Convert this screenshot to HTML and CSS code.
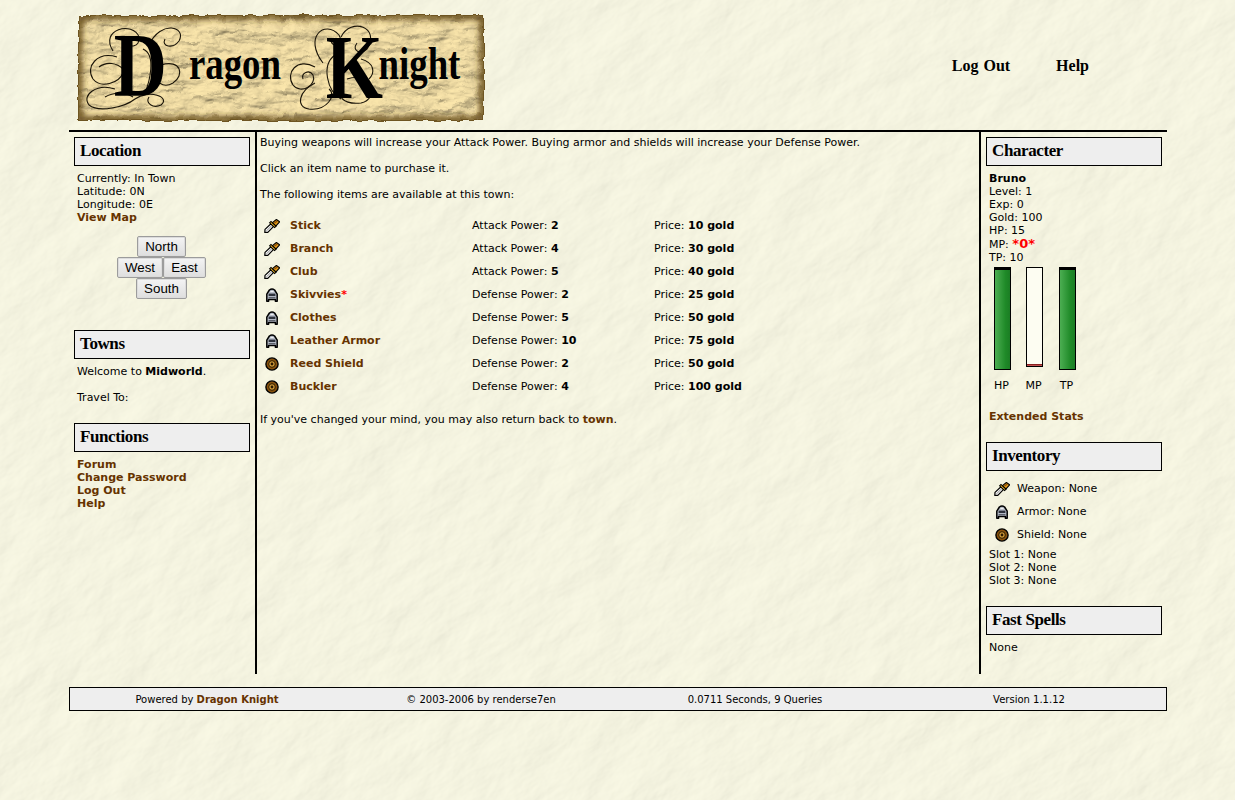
FILE: index.html
```html
<!DOCTYPE html>
<html lang="en">
<head>
    <meta charset="UTF-8">
    <meta name="viewport" content="width=device-width, initial-scale=1.0">
    <title>Dragon Knight</title>
    <link rel="stylesheet" href="styles.css">
</head>
<body>

    <!-- item icons, reused below -->
    <svg class="defs" width="0" height="0">
        <symbol id="icon-sword" viewBox="0 0 16 14">
            <path d="M0.8 13.4 L1 10.4 L7 4.8 L9.6 7.4 L3.8 13.4 Z" fill="#fafafa" stroke="#000" stroke-width="1.2" stroke-linejoin="round"/>
            <path d="M2.6 11.8 L7.6 6.8" stroke="#8a8a8a" stroke-width="1"/>
            <path d="M5.6 3.8 L7 2.4 L12 7.2 L10.6 8.6 Z" fill="#f4b820" stroke="#000" stroke-width="1.1"/>
            <path d="M8.4 3.6 L12.4 0.5 L15.6 2.8 L12 6.8 Z" fill="#e89c14" stroke="#000" stroke-width="1.1" stroke-linejoin="round"/>
            <path d="M10.4 4 L13.4 2" stroke="#8a4c08" stroke-width="1.2"/>
        </symbol>
        <symbol id="icon-armor" viewBox="0 0 14 14">
            <path d="M1.8 13.2 V6.2 L4.4 2 Q7 0.2 9.6 2 L12.2 6.2 V13.2 H10.4 V11.4 H3.6 V13.2 Z" fill="#b4bac6" stroke="#000" stroke-width="1.5" stroke-linejoin="round"/>
            <path d="M3.6 5.6 H10.4 V8 H3.6 Z" fill="#2e323c"/>
            <path d="M3.6 9.6 H10.4" stroke="#5c606a" stroke-width="1.2"/>
            <path d="M5.4 3.6 H8.6" stroke="#f4f4f4" stroke-width="1"/>
        </symbol>
        <symbol id="icon-shield" viewBox="0 0 14 14">
            <circle cx="7" cy="7" r="6.1" fill="#87500c" stroke="#000" stroke-width="1.4"/>
            <circle cx="7" cy="7" r="3.3" fill="#d09a38" stroke="#2c1a00" stroke-width="1"/>
            <circle cx="7" cy="7" r="1.4" fill="#2a1800"/>
        </symbol>
    </svg>

    <div class="page">

        <header class="top">
            <svg class="logo" width="408" height="110" viewBox="0 0 408 110">
                <defs>
                    <filter id="rough" x="-3%" y="-8%" width="106%" height="116%">
                        <feTurbulence type="fractalNoise" baseFrequency="0.09" numOctaves="3" seed="4" result="n"/>
                        <feDisplacementMap in="SourceGraphic" in2="n" scale="5"/>
                    </filter>
                    <filter id="parchment" x="0" y="0" width="100%" height="100%">
                        <feTurbulence type="fractalNoise" baseFrequency="0.03 0.08" numOctaves="5" seed="9" result="n"/>
                        <feDiffuseLighting in="n" surfaceScale="5" lighting-color="#fbe6ac" result="l">
                            <feDistantLight azimuth="45" elevation="60"/>
                        </feDiffuseLighting>
                        <feComposite in="l" in2="SourceAlpha" operator="in"/>
                    </filter>
                    <filter id="blur3"><feGaussianBlur stdDeviation="3"/></filter>
                    <clipPath id="sheet"><rect x="2" y="3" width="404" height="104"/></clipPath>
                </defs>
                <g filter="url(#rough)">
                    <rect x="1" y="2" width="406" height="106" fill="#6e5420"/>
                    <g clip-path="url(#sheet)">
                        <rect x="1" y="2" width="406" height="106" fill="#fff" filter="url(#parchment)"/>
                        <rect x="2" y="3" width="404" height="104" fill="none" stroke="#5e4512" stroke-width="7" filter="url(#blur3)"/>
                    </g>
                </g>
                <g class="logo-swirls">
                    <path d="M36 38 C22 16 56 8 62 24 C64 34 50 36 52 28"/>
                    <path d="M72 32 C84 6 110 14 102 28 C96 36 84 34 88 26"/>
                    <path d="M40 44 C20 38 8 54 16 66 C24 76 42 70 46 60"/>
                    <path d="M22 54 C30 48 40 50 46 56"/>
                    <path d="M38 76 C20 70 4 82 12 92 C22 100 48 94 58 86 C72 76 94 84 84 92 C76 96 68 90 72 84"/>
                    <path d="M84 52 C104 46 108 62 96 70 C86 76 76 68 82 60"/>
                    <path d="M66 36 C80 42 72 70 68 80"/>
                    <path d="M28 84 C38 78 50 80 56 84"/>
                    <path d="M246 50 C226 24 248 6 262 22 C268 32 256 36 254 28"/>
                    <path d="M264 24 C274 4 304 14 290 36 C284 42 274 38 280 30"/>
                    <path d="M238 54 C220 44 208 60 216 72 C224 82 240 72 236 62 C232 56 224 60 226 66"/>
                    <path d="M238 70 C222 78 218 94 232 96 C250 98 260 82 252 76"/>
                    <path d="M270 66 C298 58 302 86 284 90 C266 92 258 82 266 74"/>
                    <path d="M258 42 C244 52 250 78 264 86"/>
                    <path d="M284 46 C298 50 298 60 292 66"/>
                </g>
                <text class="logo-text" transform="scale(0.8 1)"><tspan class="logo-cap" x="46" y="83">D</tspan><tspan x="140" y="66">ragon </tspan><tspan class="logo-cap" x="311" y="85">K</tspan><tspan x="377" y="66">night</tspan></text>
            </svg>
            <nav class="topnav">
                <a href="#">Log Out</a>
                <a href="#">Help</a>
            </nav>
        </header>

        <div class="columns">

            <aside class="side">
                <section class="panel">
                    <h2 class="title">Location</h2>
                    <div class="lines">
                        Currently: In Town<br>
                        Latitude: 0N<br>
                        Longitude: 0E<br>
                        <a href="#">View Map</a>
                    </div>
                    <div class="compass">
                        <div><button class="btn-north">North</button></div>
                        <div><button class="btn-west">West</button><button class="btn-east">East</button></div>
                        <div><button class="btn-south">South</button></div>
                    </div>
                </section>

                <section class="panel towns">
                    <h2 class="title">Towns</h2>
                    <div class="lines">
                        Welcome to <b>Midworld</b>.<br><br>
                        Travel To:
                    </div>
                </section>

                <section class="panel functions">
                    <h2 class="title">Functions</h2>
                    <div class="lines">
                        <a href="#">Forum</a><br>
                        <a href="#">Change Password</a><br>
                        <a href="#">Log Out</a><br>
                        <a href="#">Help</a>
                    </div>
                </section>
            </aside>

            <main class="content">
                <p>Buying weapons will increase your Attack Power. Buying armor and shields will increase your Defense Power.</p>
                <p>Click an item name to purchase it.</p>
                <p>The following items are available at this town:</p>

                <div class="items">
                    <div class="item">
                        <svg class="icon"><use href="#icon-sword"/></svg>
                        <a href="#">Stick</a>
                        <span>Attack Power: <b>2</b></span>
                        <span>Price: <b>10 gold</b></span>
                    </div>
                    <div class="item">
                        <svg class="icon"><use href="#icon-sword"/></svg>
                        <a href="#">Branch</a>
                        <span>Attack Power: <b>4</b></span>
                        <span>Price: <b>30 gold</b></span>
                    </div>
                    <div class="item">
                        <svg class="icon"><use href="#icon-sword"/></svg>
                        <a href="#">Club</a>
                        <span>Attack Power: <b>5</b></span>
                        <span>Price: <b>40 gold</b></span>
                    </div>
                    <div class="item">
                        <svg class="icon"><use href="#icon-armor"/></svg>
                        <span><a href="#">Skivvies</a><b class="special">*</b></span>
                        <span>Defense Power: <b>2</b></span>
                        <span>Price: <b>25 gold</b></span>
                    </div>
                    <div class="item">
                        <svg class="icon"><use href="#icon-armor"/></svg>
                        <a href="#">Clothes</a>
                        <span>Defense Power: <b>5</b></span>
                        <span>Price: <b>50 gold</b></span>
                    </div>
                    <div class="item">
                        <svg class="icon"><use href="#icon-armor"/></svg>
                        <a href="#">Leather Armor</a>
                        <span>Defense Power: <b>10</b></span>
                        <span>Price: <b>75 gold</b></span>
                    </div>
                    <div class="item">
                        <svg class="icon"><use href="#icon-shield"/></svg>
                        <a href="#">Reed Shield</a>
                        <span>Defense Power: <b>2</b></span>
                        <span>Price: <b>50 gold</b></span>
                    </div>
                    <div class="item">
                        <svg class="icon"><use href="#icon-shield"/></svg>
                        <a href="#">Buckler</a>
                        <span>Defense Power: <b>4</b></span>
                        <span>Price: <b>100 gold</b></span>
                    </div>
                </div>

                <p class="back">If you've changed your mind, you may also return back to <a href="#">town</a>.</p>
            </main>

            <aside class="side">
                <section class="panel">
                    <h2 class="title">Character</h2>
                    <div class="lines">
                        <b>Bruno</b><br>
                        Level: 1<br>
                        Exp: 0<br>
                        Gold: 100<br>
                        HP: 15<br>
                        MP: <b class="special big">*0*</b><br>
                        TP: 10
                    </div>
                    <div class="bars">
                        <div class="bar-col">
                            <div class="bar"><div class="fill" style="height: 100%"></div></div>
                            <span>HP</span>
                        </div>
                        <div class="bar-col">
                            <div class="bar bar-empty"><div class="fill fill-low" style="height: 2px"></div></div>
                            <span>MP</span>
                        </div>
                        <div class="bar-col">
                            <div class="bar"><div class="fill" style="height: 100%"></div></div>
                            <span>TP</span>
                        </div>
                    </div>
                    <div class="lines extended"><a href="#">Extended Stats</a></div>
                </section>

                <section class="panel inventory">
                    <h2 class="title">Inventory</h2>
                    <div class="gear">
                        <div class="gear-row"><svg class="icon"><use href="#icon-sword"/></svg><span>Weapon: None</span></div>
                        <div class="gear-row"><svg class="icon"><use href="#icon-armor"/></svg><span>Armor: None</span></div>
                        <div class="gear-row"><svg class="icon"><use href="#icon-shield"/></svg><span>Shield: None</span></div>
                    </div>
                    <div class="lines slots">
                        Slot 1: None<br>
                        Slot 2: None<br>
                        Slot 3: None
                    </div>
                </section>

                <section class="panel spells">
                    <h2 class="title">Fast Spells</h2>
                    <div class="lines">None</div>
                </section>
            </aside>

        </div>

        <footer class="bottom">
            <div>Powered by <a href="#">Dragon Knight</a></div>
            <div>© 2003-2006 by renderse7en</div>
            <div>0.0711 Seconds, 9 Queries</div>
            <div>Version 1.1.12</div>
        </footer>

    </div>

</body>
</html>
```

FILE: styles.css
```css
html, body {
    margin: 0;
    padding: 0;
}

body {
    height: 800px;
    overflow: hidden;
    font-family: "DejaVu Sans", Verdana, sans-serif;
    font-size: 11px;
    line-height: 13px;
    color: #000;
    background-color: #f6f5df;
    background-image: url("data:image/svg+xml,%3Csvg xmlns='http://www.w3.org/2000/svg' width='1235' height='800'%3E%3Cfilter id='p' x='0' y='0' width='100%25' height='100%25'%3E%3CfeTurbulence type='fractalNoise' baseFrequency='0.016 0.028' numOctaves='5' seed='7'/%3E%3CfeDiffuseLighting surfaceScale='1.7' lighting-color='%23fbfae6'%3E%3CfeDistantLight azimuth='60' elevation='70'/%3E%3C/feDiffuseLighting%3E%3C/filter%3E%3Crect x='-500' y='-500' width='2400' height='2200' transform='rotate(-35 600 400)' filter='url(%23p)'/%3E%3C/svg%3E");
    background-repeat: no-repeat;
}

a {
    color: #663300;
    font-weight: bold;
    text-decoration: none;
}

.defs {
    position: absolute;
}

.page {
    width: 1098px;
    margin-left: 69px;
}

/* header */

.top {
    display: flex;
    justify-content: space-between;
    height: 130px;
    border-bottom: 2px solid #000;
}

.logo {
    margin: 13px 0 0 8px;
}

.logo-swirls path {
    fill: none;
    stroke: #1a1408;
    stroke-width: 1.1;
}

.logo-text {
    font-family: "Liberation Serif", serif;
    font-size: 46px;
    font-weight: bold;
    fill: #000;
}

.logo-cap {
    font-size: 92px;
}

.topnav {
    display: flex;
    gap: 46px;
    margin: 56px 78px 0 0;
}

.topnav a {
    font-family: "Liberation Serif", serif;
    font-size: 16px;
    line-height: 20px;
    color: #000;
    word-spacing: 1px;
}

/* columns */

.columns {
    display: grid;
    grid-template-columns: 186px 1fr 186px;
    height: 542px;
}

.side {
    padding: 5px 5px 0;
}

.content {
    border-left: 2px solid #000;
    border-right: 2px solid #000;
    padding: 4px 3px 0;
}

.content p {
    margin: 0 0 13px;
}

.title {
    height: 27px;
    margin: 0;
    padding-left: 5px;
    border: 1px solid #000;
    background: #eeeeee;
    font-family: "Liberation Serif", serif;
    font-size: 17px;
    line-height: 25px;
    font-weight: bold;
    letter-spacing: -0.4px;
}

.lines {
    padding: 6px 3px 0;
}

.compass {
    margin-top: 12px;
    padding-right: 1px;
    text-align: center;
}

.compass div {
    display: flex;
    justify-content: center;
    height: 21px;
}

.compass button {
    box-sizing: border-box;
    height: 21px;
    padding: 0 6px;
    border: 1px solid #9c9c9c;
    border-radius: 2px;
    box-shadow: inset 0 0 0 1px #dcdcdc;
    background: linear-gradient(#f4f4f4, #dedede);
    font-family: "Liberation Sans", Arial, sans-serif;
    font-size: 13.333px;
    color: #000;
}

.btn-north { width: 49px; }
.btn-west { width: 46px; }
.btn-east { width: 43px; }
.btn-south { width: 51px; }

.towns {
    margin-top: 31px;
}

.functions {
    margin-top: 19px;
}

/* items list */

.items {
    margin-top: 13px;
}

.item {
    display: grid;
    grid-template-columns: 30px 182px 182px 182px;
    align-items: center;
    height: 23px;
}

.icon {
    width: 16px;
    height: 14px;
    margin-left: 4px;
}

.special {
    color: #ff0000;
    font-weight: bold;
}

.big {
    font-size: 13px;
}

.back {
    margin-top: 15px !important;
}

/* character bars */

.bars {
    display: flex;
    margin: 3px 0 0 8px;
}

.bar-col {
    width: 17px;
    margin-right: 15px;
    text-align: center;
}

.bar-col:nth-child(2) {
    margin-right: 16px;
}

.bar-col span {
    display: block;
    margin: 9px -3px 0 -5px;
}

.bar {
    box-sizing: border-box;
    display: flex;
    align-items: flex-end;
    height: 103px;
    border: 1px solid #000;
    background: #fdfdf2;
}

.bar-empty {
    height: 100px;
    margin-bottom: 12px;
}

.fill {
    width: 100%;
    border-top: 2px solid #000;
    box-sizing: border-box;
    background: linear-gradient(to right, #4cae52, #1f8a28 70%, #1b7d24);
}

.fill-low {
    border-top: 1px solid #8a2020;
    background: #c05050;
}

.extended {
    padding-top: 18px;
}

/* inventory */

.inventory {
    margin-top: 19px;
}

.gear {
    padding: 6px 0 0 4px;
}

.gear-row {
    display: flex;
    align-items: center;
    gap: 7px;
    height: 23px;
}

.slots {
    padding-top: 2px;
}

.spells {
    margin-top: 19px;
}

/* footer */

.bottom {
    display: grid;
    grid-template-columns: repeat(4, 1fr);
    align-items: center;
    box-sizing: border-box;
    height: 24px;
    margin-top: 13px;
    border: 1px solid #000;
    background: #eeeeee;
    font-size: 10px;
    text-align: center;
}
```
